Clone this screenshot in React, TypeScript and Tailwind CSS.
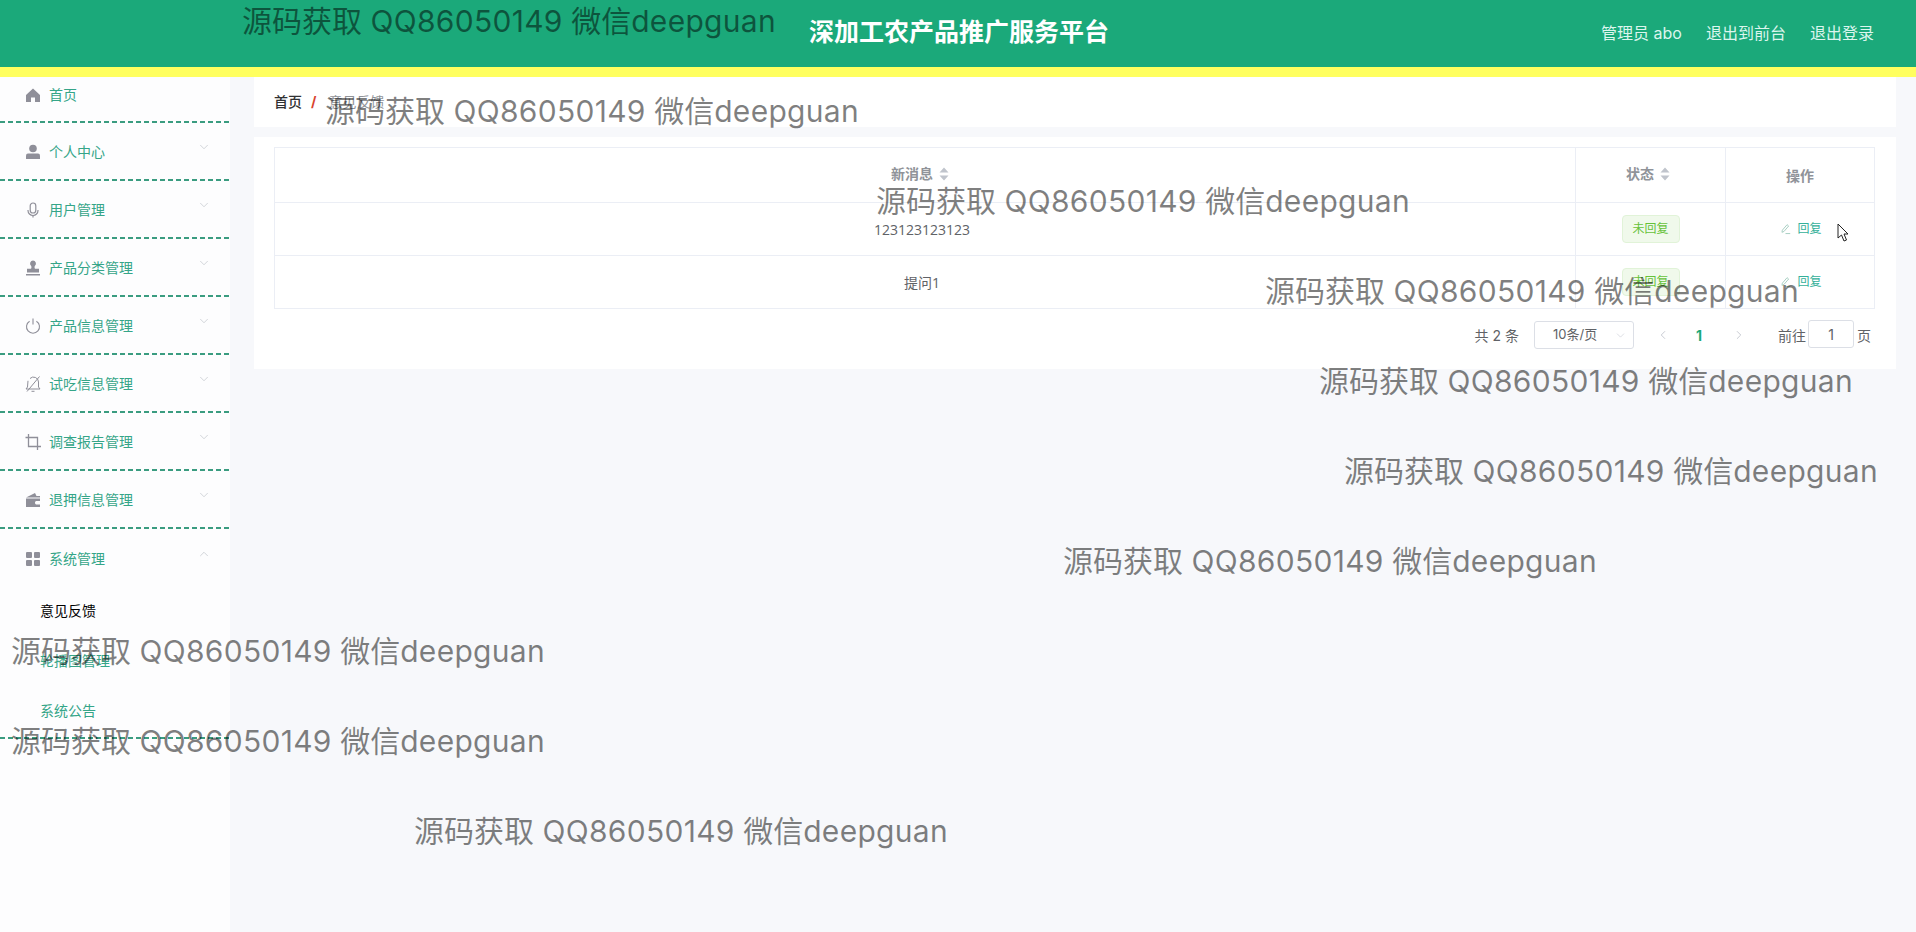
import { ChevronDown, ChevronUp, ChevronLeft, ChevronRight } from "lucide-react";
import { ReactNode } from "react";

const cjk = "font-['Inter','Noto_Sans_CJK_SC',sans-serif]";

const watermarks = [
  { left: 242, top: -1 },
  { left: 325, top: 89 },
  { left: 876, top: 179 },
  { left: 1265, top: 269 },
  { left: 1319, top: 359 },
  { left: 1344, top: 449 },
  { left: 1063, top: 539 },
  { left: 11, top: 629 },
  { left: 11, top: 719 },
  { left: 414, top: 809 },
];

const HomeIcon = () => (
  <svg viewBox="0 0 16 16" className="w-[16px] h-[16px] fill-[#8f8f99]">
    <path d="M8 1.500 1 8v7h5v-4.500h4V15h5V8z" />
  </svg>
);
const UserIcon = () => (
  <svg viewBox="0 0 16 16" className="w-[16px] h-[16px] fill-[#8f8f99]">
    <circle cx="8" cy="4.500" r="3.800" />
    <path d="M1 11.500q0-2 2-2h10q2 0 2 2V15H1z" />
  </svg>
);
const MicIcon = () => (
  <svg viewBox="0 0 16 16" className="w-[16px] h-[16px] fill-none stroke-[#8f8f99]" strokeWidth="1.200">
    <rect x="5.200" y="1" width="5.600" height="10" rx="2.800" />
    <path d="M3 8v.5a5 5 0 0 0 10 0V8M8 13.500V15.500" />
  </svg>
);
const StampIcon = () => (
  <svg viewBox="0 0 16 16" className="w-[16px] h-[16px] fill-[#8f8f99]">
    <path d="M8 .5a3 3 0 0 1 2 5.200c-.6.7-.6 2 0 3h4v3.800H2V8.700h4c.6-1 .6-2.300 0-3A3 3 0 0 1 8 .5zM1 14h14v1.500H1z" />
  </svg>
);
const PowerIcon = () => (
  <svg viewBox="0 0 16 16" className="w-[16px] h-[16px] fill-none stroke-[#8f8f99]" strokeWidth="1.100">
    <path d="M4.600 3.200a6.500 6.500 0 1 0 6.800 0M8 .5v6" />
  </svg>
);
const BellOffIcon = () => (
  <svg viewBox="0 0 16 16" className="w-[16px] h-[16px] fill-none stroke-[#8f8f99]" strokeWidth="1">
    <path d="M1 13h14l-1.500-2V6a5 5 0 0 0-8.500-3.500M3 4.800 2.500 11 1 13M14.500 .5 2 15.500M6.500 15.300h3" />
  </svg>
);
const CropIcon = () => (
  <svg viewBox="0 0 16 16" className="w-[16px] h-[16px] fill-none stroke-[#8f8f99]" strokeWidth="1.300">
    <path d="M3.500 0v12.500H16M.5 3.500h12V16" />
  </svg>
);
const WalletIcon = () => (
  <svg viewBox="0 0 16 16" className="w-[16px] h-[16px] fill-[#8f8f99]">
    <path d="M1 5.500 10 1l1.500 3H15v1.500H1zM1 6.500h14v2.500h-4a2 2 0 0 0 0 3.500h4V15H1z" />
  </svg>
);
const GridIcon = () => (
  <svg viewBox="0 0 16 16" className="w-[16px] h-[16px] fill-[#8f8f99]">
    <rect x="1" y="1" width="6" height="6" rx="1" />
    <rect x="9" y="1" width="6" height="6" rx="1" />
    <rect x="1" y="9" width="6" height="6" rx="1" />
    <rect x="9" y="9" width="6" height="6" rx="1" />
  </svg>
);

const SortCaret = () => (
  <svg viewBox="0 0 10 14" className="w-[10px] h-[14px] fill-[#c0c4cc] ml-[6px]">
    <path d="M5 .5 9.500 5.500H.5zM5 13.500.5 8.500h9z" />
  </svg>
);

const EditIcon = () => (
  <svg viewBox="0 0 14 14" className="w-[11px] h-[12px] fill-none stroke-[#9cc9bb]" strokeWidth="1.100">
    <path d="M3 8.500 9 1.500l2 1.700-6 7-2.500 1zM7 12.800h6" />
  </svg>
);

const Dash = () => (
  <div className="h-[2px] bg-[repeating-linear-gradient(90deg,#3a9c80_0_5px,transparent_5px_8px)]" />
);

function MenuItem({ icon, label, open, first }: { icon: ReactNode; label: string; open?: boolean; first?: boolean }) {
  return (
    <>
      <div className={`flex px-[25px] ${first ? "h-[44px] pt-[8px]" : open ? "h-[56px] pt-[20px]" : "h-[56px] pt-[19px]"}`}>
        <span className="w-[24px] h-[20px] flex items-center shrink-0">{icon}</span>
        <span className="text-[14px] leading-[20px] text-[#35a588] flex-1">{label}</span>
        {!first && (
          <span className="text-[#b4b8bf] -mt-[2px] -mr-[6px]">
            {open ? <ChevronUp size={14} strokeWidth={1} /> : <ChevronDown size={14} strokeWidth={1} />}
          </span>
        )}
      </div>
      {!open && <Dash />}
    </>
  );
}

function Sidebar() {
  return (
    <div className="w-[230px] shrink-0 bg-[#fdfdfe] min-h-[855px]">
      <MenuItem first icon={<HomeIcon />} label="首页" />
      <MenuItem icon={<UserIcon />} label="个人中心" />
      <MenuItem icon={<MicIcon />} label="用户管理" />
      <MenuItem icon={<StampIcon />} label="产品分类管理" />
      <MenuItem icon={<PowerIcon />} label="产品信息管理" />
      <MenuItem icon={<BellOffIcon />} label="试吃信息管理" />
      <MenuItem icon={<CropIcon />} label="调查报告管理" />
      <MenuItem icon={<WalletIcon />} label="退押信息管理" />
      <MenuItem open icon={<GridIcon />} label="系统管理" />
      <div className="pb-[2px]">
        <div className="h-[50px] pl-[40px] flex items-center text-[14px] text-black">意见反馈</div>
        <div className="h-[50px] pl-[40px] flex items-center text-[14px] text-[#35a588]">轮播图管理</div>
        <div className="h-[50px] pl-[40px] flex items-center text-[14px] text-[#35a588]">系统公告</div>
      </div>
      <Dash />
    </div>
  );
}

function Row({ text }: { text: string }) {
  return (
    <tr className="h-[53px] border-b border-[#ebeef5]">
      <td className="text-center text-[14px] text-[#606266] border-r border-[#ebeef5] align-middle font-['Open_Sans','Noto_Sans_CJK_SC',sans-serif]">
        <span className="inline-block mt-[1px] pr-[6px]">{text}</span>
      </td>
      <td className="text-center border-r border-[#ebeef5] align-middle">
        <span className="inline-block w-[58px] h-[28px] leading-[26px] text-[12px] bg-[#f0f9eb] border border-[#e1f3d8] rounded-[4px] text-[#67c23a]">未回复</span>
      </td>
      <td className="align-middle">
        <div className="flex items-center justify-center gap-[6px] text-[12px] text-[#35b09a] -mt-[1px] pl-[2px]">
          <EditIcon />
          回复
        </div>
      </td>
    </tr>
  );
}

function Pagination() {
  return (
    <div className="flex items-center justify-end pr-[4px] mt-[12px] h-[28px] text-[14px] text-[#606266]">
      <span>共 2 条</span>
      <div className="ml-[15px] w-[100px] h-[28px] border border-[#dcdfe6] rounded-[3px] flex items-center pl-[18px] pr-[6px]">
        <span className="flex-1 text-[13px]">10条/页</span>
        <ChevronDown size={13} strokeWidth={1} className="text-[#c0c4cc]" />
      </div>
      <ChevronLeft size={14} strokeWidth={1.500} className="ml-[22px] text-[#c0c4cc]" />
      <span className="ml-[26px] font-bold text-[#1ba97a]">1</span>
      <ChevronRight size={14} strokeWidth={1.500} className="ml-[30px] text-[#c0c4cc]" />
      <span className="ml-[32px]">前往</span>
      <div className="ml-[2px] w-[46px] h-[28px] -mt-[2px] border border-[#dcdfe6] rounded-[3px] flex items-center justify-center">1</div>
      <span className="ml-[3px]">页</span>
    </div>
  );
}

export default function App() {
  return (
    <div className={`relative w-full h-[932px] overflow-hidden bg-[#f7f8fb] ${cjk}`}>
      {/* Header */}
      <div className="h-[67px] bg-[#1ba97a] relative flex items-center justify-end pr-[42px] gap-[24px] text-[16px] text-[#dcf5ee] pb-[2px]">
        <div className="absolute left-0 right-0 top-0 bottom-0 flex items-center justify-center pb-[2px] pl-[2px] text-[25px] font-bold text-white">深加工农产品推广服务平台</div>
        <span className="relative">管理员 abo</span>
        <span className="relative">退出到前台</span>
        <span className="relative">退出登录</span>
      </div>
      <div className="h-[10px] bg-[#ffff5f]" />

      <div className="flex">
        <Sidebar />
        <div className="flex-1 pl-[24px] pr-[20px]">
          {/* Breadcrumb */}
          <div className="h-[50px] bg-white flex items-center pl-[20px] pb-[2px] text-[14px]">
            <span className="font-medium text-[#303133]">首页</span>
            <span className="ml-[9px] mr-[12px] text-[#d9432f] font-bold">/</span>
            <span className="text-[#909399]">意见反馈</span>
          </div>
          {/* Table card */}
          <div className="mt-[10px] bg-white h-[232px] pt-[10px] pl-[20px] pr-[21px]">
            <table className="w-full border-collapse border border-[#ebeef5] table-fixed">
              <thead>
                <tr className="h-[55px] border-b border-[#ebeef5] text-[14px] font-bold text-[#909399]">
                  <th className="border-r border-[#ebeef5]">
                    <div className="flex items-center justify-center -mt-[3px] pr-[10px]">新消息<SortCaret /></div>
                  </th>
                  <th className="w-[150px] border-r border-[#ebeef5]">
                    <div className="flex items-center justify-center -mt-[3px] pr-[5px]">状态<SortCaret /></div>
                  </th>
                  <th className="w-[149px]">操作</th>
                </tr>
              </thead>
              <tbody>
                <Row text="123123123123" />
                <Row text="提问1" />
              </tbody>
            </table>
            <Pagination />
          </div>
        </div>
      </div>

      {/* Watermarks */}
      {watermarks.map((w, i) => (
        <div
          key={i}
          className="absolute text-[30px] leading-[44px] whitespace-nowrap text-black/50 pointer-events-none"
          style={{ left: w.left, top: w.top }}
        >
          源码获取 <span className="tracking-[0.3px]">QQ86050149</span> 微信<span className="tracking-[0.3px]">deepguan</span>
        </div>
      ))}

      {/* Mouse cursor */}
      <svg viewBox="0 0 12 20" className="absolute left-[1837px] top-[223px] w-[12px] h-[20px] fill-white stroke-[#222]" strokeWidth="1">
        <path d="M1 1v14l3.500-3 2.500 6 2.500-1-2.500-6H11z" />
      </svg>
    </div>
  );
}
